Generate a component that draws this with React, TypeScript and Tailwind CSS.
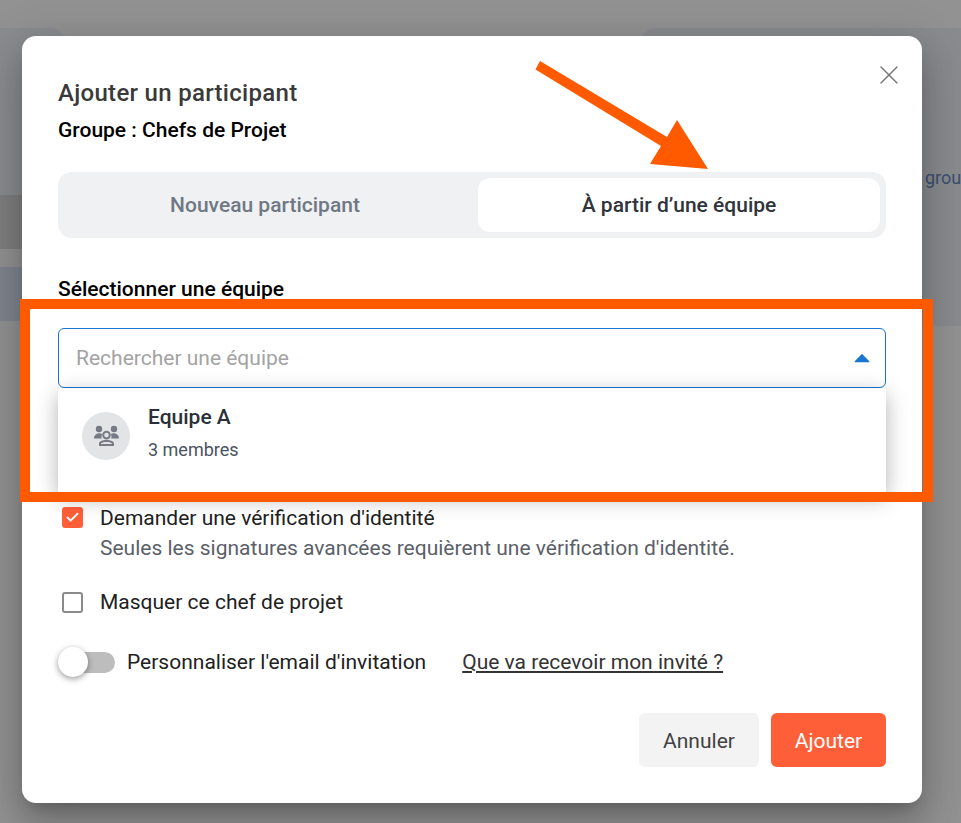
import { X, Check } from "lucide-react";

function TeamIcon() {
  return (
    <svg width="27" height="26" viewBox="0 0 27 26" fill="#757a83">
      <circle cx="6" cy="6" r="3.200" />
      <circle cx="21" cy="6" r="3.200" />
      <path d="M1 15.500c0-3 2.400-5.200 5.300-5.200 1.100 0 2.100.3 2.900.8-.5.700-.7 1.500-.7 2.400 0 .7.100 1.400.4 2H1z" />
      <path d="M26 15.500c0-3-2.400-5.200-5.300-5.200-1.100 0-2.100.3-2.900.8.500.7.7 1.500.7 2.400 0 .7-.1 1.400-.4 2H26z" />
      <path fillRule="evenodd" d="M13.500 7.800a4.300 4.300 0 1 1 0 8.600 4.300 4.300 0 0 1 0-8.600zm0 2a2.300 2.300 0 1 0 0 4.600 2.300 2.300 0 0 0 0-4.600z" />
      <path fillRule="evenodd" d="M6 23v-2.500c0-2.300 3.400-3.500 7.500-3.500s7.500 1.200 7.500 3.500V23H6zm2-2h11v-.5c-.4-.9-2.800-1.500-5.500-1.500S8.400 19.600 8 20.500v.5z" />
    </svg>
  );
}

export default function App() {
  return (
    <div className="relative h-[823px] w-[961px] overflow-hidden bg-[#929292] font-['Roboto',sans-serif]">
      {/* dimmed page behind */}
      <div className="absolute left-0 top-[28px] h-[167px] w-[66px] rounded-tr-[16px] bg-[#8a8c90]" />
      <div className="absolute left-0 top-[195px] h-[54px] w-[22px] bg-[#7f7f7f]" />
      <div className="absolute left-0 top-[267px] h-[54px] w-[22px] bg-[#80858e]" />
      <div className="absolute left-[640px] top-[28px] h-[298px] w-[321px] rounded-tl-[16px] bg-[#8a8b8f]" />
      <span className="absolute left-[925px] top-[166px] text-[18px] leading-[24px] text-[#3b4f70]">grou</span>

      {/* dialog */}
      <div className="absolute left-[22px] top-[36px] flex h-[767px] w-[900px] flex-col rounded-[14px] bg-white px-[36px] pt-[43px] shadow-[0_11px_15px_-7px_rgba(0,0,0,0.2),0_24px_38px_3px_rgba(0,0,0,0.14),0_9px_46px_8px_rgba(0,0,0,0.12)]">
        <button className="absolute right-[17px] top-[23px] text-[#757575]">
          <X size={32} strokeWidth={1} />
        </button>
        <h2 className="text-[24px] font-medium leading-[28px] tracking-[0.3px] text-[#3a3a3a]">Ajouter un participant</h2>
        <p className="mt-[11px] text-[21px] font-medium leading-[24px] text-black">Groupe : Chefs de Projet</p>

        <div className="mt-[30px] flex h-[66px] w-[828px] items-center rounded-[14px] bg-[#f0f1f3] p-[6px]">
          <div className="flex h-[54px] w-[414px] items-center justify-center pr-[12px] pt-[1px] text-[21px] font-medium text-[#6f7884]">Nouveau participant</div>
          <div className="flex h-[54px] w-[402px] items-center justify-center rounded-[12px] bg-white pt-[1px] text-[21px] font-medium text-[#30343b]">À partir d’une équipe</div>
        </div>

        <label className="mt-[39px] text-[21px] font-medium leading-[24px] text-black">Sélectionner une équipe</label>

        <div className="mt-[27px] flex h-[60px] w-[828px] items-center justify-between rounded-[6px] border border-[#1976d2] pl-[17px] pr-[15px]">
          <span className="pt-[2px] text-[21px] text-[#a3a3a3]">Rechercher une équipe</span>
          <svg width="16" height="10" viewBox="0 0 16 10" fill="#1976d2">
            <path d="M8 .8 15.500 8.400 15 9.200H1L.5 8.400z" />
          </svg>
        </div>

        <div className="relative z-10 flex h-[104px] w-[828px] gap-[18px] bg-white pl-[24px] pt-[24px] shadow-[0_6px_20px_rgba(0,0,0,0.3)]">
          <div className="flex h-[48px] w-[48px] items-center justify-center rounded-full bg-[#e3e4e6]">
            <TeamIcon />
          </div>
          <div className="-mt-[7px]">
            <div className="text-[21px] font-medium leading-[24px] text-[#2b3038]">Equipe A</div>
            <div className="mt-[10px] text-[18px] leading-[22px] text-[#4a5361]">3 membres</div>
          </div>
        </div>

        <div className="mt-[14px] flex gap-[17px] pl-[4px]">
          <div className="mt-[1px] flex h-[21px] w-[21px] items-center justify-center rounded-[3px] bg-[#ff5f38]">
            <Check size={15} strokeWidth={3} className="text-white" />
          </div>
          <div>
            <div className="text-[21px] leading-[24px] text-[#212121]">Demander une vérification d'identité</div>
            <div className="mt-[6px] text-[21px] leading-[24px] text-[#5b6069]">Seules les signatures avancées requièrent une vérification d'identité.</div>
          </div>
        </div>

        <div className="mt-[30px] flex items-center gap-[17px] pl-[4px]">
          <div className="h-[21px] w-[21px] rounded-[3px] border-2 border-[#8a8a8a]" />
          <div className="text-[21px] leading-[24px] text-[#212121]">Masquer ce chef de projet</div>
        </div>

        <div className="mt-[36px] flex items-center">
          <div className="relative h-[21px] w-[57px] rounded-full bg-[#bdbdbd]">
            <div className="absolute -top-[5px] left-0 h-[30px] w-[30px] rounded-full bg-white shadow-[0_2px_6px_rgba(0,0,0,0.4)]" />
          </div>
          <span className="ml-[12px] text-[21px] leading-[24px] text-[#212121]">Personnaliser l'email d'invitation</span>
          <a className="ml-[36px] text-[21px] leading-[24px] text-[#333333] underline">Que va recevoir mon invité ?</a>
        </div>

        <div className="mt-[39px] flex justify-end gap-[12px]">
          <button className="h-[54px] w-[120px] rounded-[6px] bg-[#f3f3f3] pt-[4px] text-[21px] text-[#424242]">Annuler</button>
          <button className="h-[54px] w-[115px] rounded-[6px] bg-[#ff5f38] pt-[4px] text-[21px] text-white">Ajouter</button>
        </div>
      </div>

      {/* annotations */}
      <div className="absolute left-[20px] top-[299px] z-20 h-[203px] w-[913px] border-[10px] border-[#ff5a00]" />
      <svg className="absolute left-[530px] top-[55px] z-20" width="185" height="120" viewBox="0 0 185 120" fill="#ff5a00">
        <path d="M10 6 L5.500 14.500 L131 91 L120 109 L178 114 L147 65 L137 82 Z" />
      </svg>
    </div>
  );
}
